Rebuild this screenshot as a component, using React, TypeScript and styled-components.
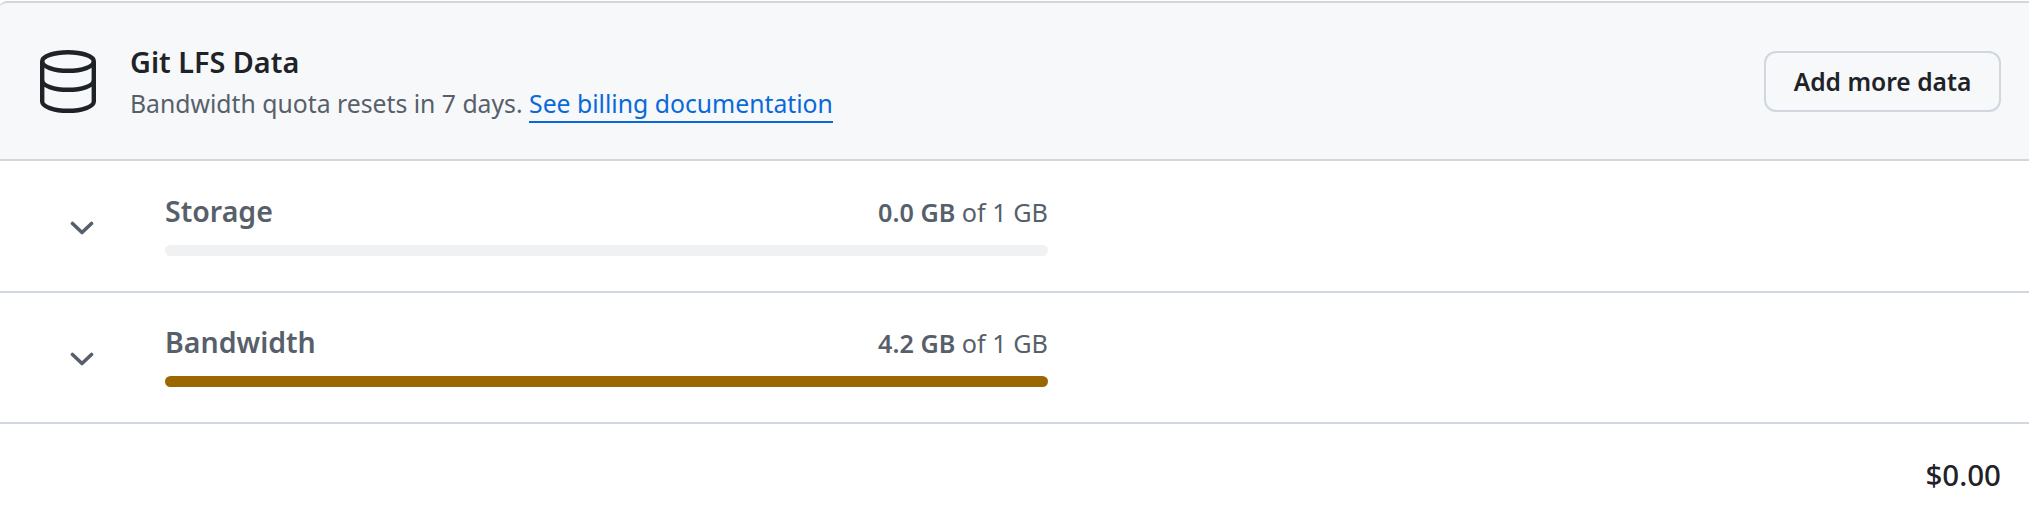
import React from 'react';
import styled, { createGlobalStyle } from 'styled-components';

const GlobalStyle = createGlobalStyle`
  html, body {
    margin: 0;
    padding: 0;
    background: #fff;
    font-family: "Noto Sans", "Open Sans", sans-serif;
  }
`;

type Usage = {
  name: string;
  used: string;
  total: string;
  percent: number;
};

const usages: Usage[] = [
  { name: 'Storage', used: '0.0 GB', total: '1 GB', percent: 0 },
  { name: 'Bandwidth', used: '4.2 GB', total: '1 GB', percent: 100 },
];

const App = () => (
  <Page>
    <GlobalStyle />
    <Header>
      <DatabaseIcon />
      <HeaderText>
        <Title>Git LFS Data</Title>
        <Subtitle>
          Bandwidth quota resets in 7 days. <DocLink href="#">See billing documentation</DocLink>
        </Subtitle>
      </HeaderText>
      <AddButton>Add more data</AddButton>
    </Header>
    {usages.map((usage) => (
      <UsageRow key={usage.name}>
        <ChevronCell>
          <ChevronIcon />
        </ChevronCell>
        <UsageBody>
          <UsageLabels>
            <UsageName>{usage.name}</UsageName>
            <UsageAmount>
              <strong>{usage.used}</strong> of {usage.total}
            </UsageAmount>
          </UsageLabels>
          <Track>
            <Fill style={{ width: `${usage.percent}%` }} />
          </Track>
        </UsageBody>
      </UsageRow>
    ))}
    <Footer>
      <Total>$0.00</Total>
    </Footer>
  </Page>
);

const DatabaseIcon = () => (
  <svg width="56" height="63" viewBox="0 0 56 63" fill="none" stroke="#1f2328" strokeWidth="4.4" style={{ flexShrink: 0 }}>
    <ellipse cx="28" cy="11.5" rx="25.8" ry="9.3" />
    <path d="M2.2 11.5V51.5C2.2 56.6 13.8 60.8 28 60.8S53.8 56.6 53.8 51.5V11.5" />
    <path d="M2.2 30.5C2.2 35.6 13.8 39.8 28 39.8S53.8 35.6 53.8 30.5" />
  </svg>
);

const ChevronIcon = () => (
  <svg width="24" height="14" viewBox="0 0 24 14" fill="none" stroke="#57606a" strokeWidth="3.6" strokeLinecap="round" strokeLinejoin="round">
    <path d="M2.5 2.5L12 11.5L21.5 2.5" />
  </svg>
);

const Page = styled.div`
  width: 2029px;
  height: 519px;
  padding-top: 1px;
  box-sizing: border-box;
  overflow: hidden;
  background: #fff;
`;

const Header = styled.div`
  display: flex;
  align-items: center;
  box-sizing: border-box;
  height: 160px;
  margin: 0 0 1px -1px;
  padding: 0 28px 0 41px;
  background: #f6f8fa;
  border: 2px solid #d0d7de;
  border-right: 0;
  border-left: 0;
  border-radius: 8px 0 0 0;
`;

const HeaderText = styled.div`
  flex: 1;
  margin-left: 34px;
  padding-top: 3px;
`;

const Title = styled.div`
  font-size: 28.8px;
  line-height: 34px;
  font-weight: 600;
  color: #1f2328;
`;

const Subtitle = styled.div`
  margin-top: 8px;
  font-size: 24.75px;
  line-height: 34px;
  color: #57606a;
`;

const DocLink = styled.a`
  color: #0969da;
  text-decoration: none;
  padding-bottom: 1px;
  border-bottom: 2px solid #0969da;
`;

const AddButton = styled.button`
  box-sizing: border-box;
  width: 237px;
  height: 61px;
  background: #f6f8fa;
  border: 2px solid #d0d7de;
  border-radius: 12px;
  font-family: inherit;
  font-size: 24.6px;
  font-weight: 600;
  color: #1f2328;
`;

const UsageRow = styled.div`
  display: flex;
  box-sizing: border-box;
  height: 131px;
  border-bottom: 2px solid #d0d7de;
`;

const ChevronCell = styled.div`
  display: flex;
  justify-content: center;
  width: 165px;
  padding-top: 59px;
  padding-right: 1px;
  box-sizing: border-box;
`;

const UsageBody = styled.div`
  width: 883px;
  padding-top: 27px;
`;

const UsageLabels = styled.div`
  display: flex;
  justify-content: space-between;
  align-items: center;
  height: 44px;
`;

const UsageName = styled.div`
  font-size: 28.5px;
  font-weight: 600;
  color: #57606a;
`;

const UsageAmount = styled.div`
  padding-top: 2px;
  font-size: 25.2px;
  color: #57606a;

  strong {
    font-weight: 600;
  }
`;

const Track = styled.div`
  height: 11px;
  margin-top: 12px;
  border-radius: 6px;
  background: #eff1f3;
  overflow: hidden;
`;

const Fill = styled.div`
  height: 100%;
  background: #9a6700;
`;

const Footer = styled.div`
  display: flex;
  justify-content: flex-end;
  padding: 32px 28px 0 0;
`;

const Total = styled.div`
  font-size: 29.5px;
  line-height: 38px;
  font-weight: 500;
  color: #1f2328;
`;

export default App;
